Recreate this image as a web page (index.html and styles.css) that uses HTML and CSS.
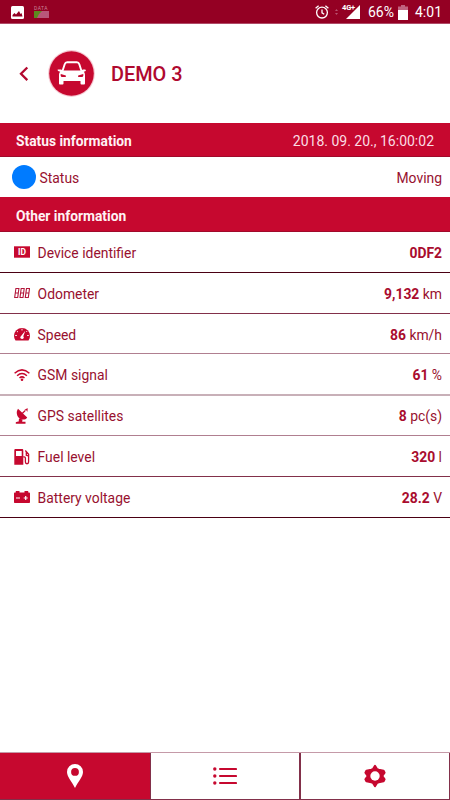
FILE: index.html
```html
<!DOCTYPE html>
<html lang="en">
<head>
    <meta charset="UTF-8">
    <meta name="viewport" content="width=device-width, initial-scale=1.0">
    <title>DEMO 3</title>
    <link rel="stylesheet" href="styles.css">
</head>
<body>
    <div class="status-bar">
        <svg class="picture-icon" width="13" height="13" viewBox="0 0 13 13"><rect width="13" height="13" rx="1.5" fill="#fff"/><path d="M1.500 10.500V9l2-2 1.500 1.500L8 5l1.500 3L10.500 7l1 3.500z" fill="#940023"/></svg>
        <div class="data-icon">
            <span>DATA</span>
            <svg width="15" height="7" viewBox="0 0 15 7"><rect width="15" height="7" fill="#b8577a"/><path d="M0 0h8L5 3 3 7H0z" fill="#5d8a1e"/></svg>
        </div>
        <div class="status-right">
            <svg class="alarm-icon" width="14" height="14" viewBox="0 0 14 14" fill="none" stroke="#fff" stroke-width="1.300"><circle cx="7" cy="7.600" r="5.400"/><path d="M7 4.500v3.300l2.200 1.400M.6 3.300L3.600.8M13.400 3.300L10.400.8"/></svg>
            <svg class="arrows-icon" width="3" height="6" viewBox="0 0 3 6" fill="#b8506e"><path d="M0 2l1.500-2L3 2zM0 4h3L1.500 6z"/></svg>
            <span class="network">4G+</span>
            <svg class="signal-icon" width="14" height="14" viewBox="0 0 14 14"><path d="M14 0v14H0z" fill="#fff"/></svg>
            <span class="percent">66%</span>
            <svg class="charge-icon" width="10" height="15" viewBox="0 0 10 15"><path d="M3 0h4v1.500h3V5H0V1.500h3z" fill="#c0627f"/><path d="M0 5h10v10H0z" fill="#fff"/></svg>
            <span class="time">4:01</span>
        </div>
    </div>

    <header>
        <svg class="back-icon" width="10" height="16" viewBox="0 0 10 16"><path d="M8.300 1.500L2 7.800l6.300 6.300" fill="none" stroke="#b3092f" stroke-width="2.300"/></svg>
        <svg class="car-icon" width="47" height="47" viewBox="0 0 47 47">
            <circle cx="23.500" cy="23.500" r="23.400" fill="#f6c9d2"/>
            <circle cx="23.500" cy="23.500" r="22.300" fill="#c6082f"/>
            <path d="M14.500 21l2.200-6.800c.4-1.300 1.200-1.900 2.500-1.900h9.600c1.300 0 2.100.6 2.500 1.900l2.200 6.800" fill="none" stroke="#fff" stroke-width="1.900"/>
            <path d="M10 19.500h3.200l1.200 1h19.200l1.200-1H37c1 0 1.200 1.500.2 1.800l-1.400.5c.9 1 1.200 2 1.200 3.500v8.200c0 .6-.3.900-.9.900h-2.700c-.6 0-.9-.3-.9-.9V31h-17v2.500c0 .6-.3.900-.9.900h-2.700c-.6 0-.9-.3-.9-.9v-8.200c0-1.500.3-2.500 1.200-3.500l-1.400-.5c-1-.3-1.800-1.800-.8-1.800z" fill="#fff"/>
            <path d="M12.800 24l5 1.500c.6 1-.2 1.600-1.200 1.600h-2.700c-1 0-1.600-1.600-1.100-3.100zM35.200 24l-5 1.500c-.6 1 .2 1.600 1.200 1.600h2.700c1 0 1.600-1.600 1.100-3.100z" fill="#c6082f"/>
        </svg>
        <h1>DEMO 3</h1>
    </header>

    <main>
        <div class="section-title">
            <h2>Status information</h2>
            <span>2018. 09. 20., 16:00:02</span>
        </div>
        <div class="status-row">
            <div class="dot"></div>
            <span>Status</span>
            <span class="value">Moving</span>
        </div>
        <div class="section-title other">
            <h2>Other information</h2>
        </div>

        <div class="row dark">
            <svg width="16" height="16" viewBox="0 0 16 16"><path d="M0 2.300h16v11.400H0z" fill="#c6082f"/><text class="id-text" x="8" y="11.100" text-anchor="middle">ID</text></svg>
            <span>Device identifier</span>
            <span class="value"><b>0DF2</b></span>
        </div>
        <div class="row">
            <svg width="16" height="16" viewBox="0 0 16 16" fill="none" stroke="#b3173b" stroke-width="1.100"><path d="M1.900 3.500h3L3.700 12.500h-3zM1.300 8h3M7.200 3.500h3L9 12.500H6zM6.600 8h3M12.500 3.500h3L14.300 12.500h-3zM11.900 8h3"/></svg>
            <span>Odometer</span>
            <span class="value"><b>9,132</b> km</span>
        </div>
        <div class="row soft">
            <svg width="16" height="16" viewBox="0 0 16 16"><path d="M1.500 14.400C.5 13 0 11.500 0 9.900a8 8 0 0 1 16 0c0 1.600-.5 3.100-1.500 4.500z" fill="#c6082f"/><path d="M11.300 4.800L9.300 10.300c1 1.300.5 2.700-1.300 2.700-1.900 0-2.400-1.800-.9-2.900z" fill="#fff"/><path d="M8 2.800v1.700M2.900 5.100l1.100 1M13.100 5.100l-.9.900M1.200 9.500h1.700M13.100 9.500h1.700" stroke="#fff" stroke-width=".9"/></svg>
            <span>Speed</span>
            <span class="value"><b>86</b> km/h</span>
        </div>
        <div class="row blurred">
            <svg width="16" height="16" viewBox="0 0 16 16" fill="none" stroke="#c6082f" stroke-width="1.500"><path d="M.6 6.200q7.400-6.600 14.800 0M3.100 8.700q4.900-4.400 9.800 0M5.500 11q2.500-2.200 5 0"/><circle cx="8" cy="12.700" r="1.300" fill="#c6082f" stroke="none"/></svg>
            <span>GSM signal</span>
            <span class="value"><b>61</b> %</span>
        </div>
        <div class="row soft">
            <svg width="16" height="16" viewBox="0 0 16 16" fill="#c6082f"><path d="M4 .8l9.200 8.600C11.500 12 7.500 12.400 5 10S2 3.800 4 .8z"/><path d="M8.200 5.500l3.200-3.100" stroke="#c6082f" stroke-width="1.300"/><path d="M10.300 1.400l3.500-1.100-.5 3.700c-.4-1.600-1.300-2.400-3-2.600zM5 10.500l3.500 1-.3 2.200h3.300v2H1.800v-1.400c.8-.6 1.900-.8 2.900-.8z"/></svg>
            <span>GPS satellites</span>
            <span class="value"><b>8</b> pc(s)</span>
        </div>
        <div class="row">
            <svg width="16" height="16" viewBox="0 0 16 16"><path d="M.3 15.800V1.400C.3.600.8.100 1.600.100H8c.8 0 1.300.5 1.300 1.300v14.400zM2 2v5h5.700V2z" fill="#c6082f" fill-rule="evenodd"/><path d="M9.200 7.800h1c.8 0 1.200.5 1.200 1.300v4c0 2.200 3.200 2.200 3.200 0V5.200L11.300 1.500M12.300 3.200v3l2 .8" fill="none" stroke="#c6082f" stroke-width="1.300"/></svg>
            <span>Fuel level</span>
            <span class="value"><b>320</b> l</span>
        </div>
        <div class="row dark">
            <svg width="16" height="16" viewBox="0 0 16 16"><path d="M0 5h16v8c0 .6-.4 1-1 1H1c-.6 0-1-.4-1-1zM0 5h16v-.6c0-.5-.3-.8-.8-.8h-1V2h-3.700v1.600H5.500V2H1.800v1.600h-1c-.5 0-.8.300-.8.800z" fill="#c6082f"/><path d="M2 9h4M9.700 9h4M11.700 7v4" stroke="#fff" stroke-width="1.200"/></svg>
            <span>Battery voltage</span>
            <span class="value"><b>28.2</b> V</span>
        </div>
    </main>

    <nav>
        <a class="active">
            <svg width="16" height="24" viewBox="0 0 16 24"><path d="M8 0a8 8 0 0 1 8 8c0 5-5 9.500-8 16C5 17.500 0 13 0 8a8 8 0 0 1 8-8zm0 4a3.900 3.900 0 1 0 0 7.800A3.900 3.900 0 0 0 8 4z" fill="#fff" fill-rule="evenodd"/></svg>
        </a>
        <a>
            <svg width="24" height="18" viewBox="0 0 24 18" fill="#c6082f"><circle cx="1.800" cy="2" r="1.700"/><circle cx="1.800" cy="9" r="1.700"/><circle cx="1.800" cy="16" r="1.700"/><path d="M7 2h16M7 9h16M7 16h16" stroke="#c6082f" stroke-width="2.100" stroke-linecap="round"/></svg>
        </a>
        <a>
            <svg width="24" height="24" viewBox="0 0 24 24"><path d="M12 1.800l2.200 3.500 1.500.5 4.900.9 1 2-2.300 3.300 2.300 3.300-1 2-4.900.9-1.500.5-2.200 3.500-2.200-3.500-1.500-.5-4.900-.9-1-2L4.700 12 2.400 8.700l1-2 4.900-.9 1.500-.5z" fill="#c6082f" stroke="#c6082f" stroke-width="2" stroke-linejoin="round"/><circle cx="12" cy="12" r="4.700" fill="#fff"/></svg>
        </a>
    </nav>
</body>
</html>
```

FILE: styles.css
```css
:root {
    --primary-red: #c6082f;
    --dark-red: #940023;
    --text-red: #98112f;
    --line: #82304a;
}

* {
    box-sizing: border-box;
}

body {
    margin: 0;
    height: 800px;
    display: flex;
    flex-direction: column;
    background: #fff;
    color: var(--text-red);
    font-family: Roboto, sans-serif;
    font-size: 13.9px;
}

svg {
    display: block;
    flex: none;
}

h1, h2 {
    margin: 0;
}

.status-bar {
    height: 24px;
    display: flex;
    align-items: center;
    padding: 1px 8px 0 11px;
    background: var(--dark-red);
    border-bottom: 1px solid #b04a67;
    color: #fff;
}

.data-icon {
    margin-left: 10px;
    padding-bottom: 2px;
    font-size: 5px;
    line-height: 6px;
    letter-spacing: 0.4px;
    color: #c98098;
}

.status-right {
    display: flex;
    align-items: center;
    margin-left: auto;
}

.arrows-icon {
    margin-left: 6px;
}

.network {
    margin: 0 -9px 8px 4px;
    font-size: 7.5px;
    font-weight: 700;
    line-height: 8px;
    letter-spacing: -0.2px;
}

.signal-icon {
    margin-right: 8px;
}

.percent, .time {
    font-size: 14px;
}

.charge-icon {
    margin: 0 7px 0 4px;
}

header {
    height: 99px;
    display: flex;
    align-items: center;
    padding-left: 19px;
}

.car-icon {
    margin: 0 16px 0 19px;
}

h1 {
    padding-top: 1px;
    font-size: 19.9px;
    font-weight: 500;
    color: #b0092f;
}

.section-title {
    height: 34px;
    display: flex;
    align-items: center;
    justify-content: space-between;
    padding: 3px 16px 0;
    background: var(--primary-red);
    border-bottom: 1px solid #a00a2b;
    color: #fbdde3;
}

.section-title span {
    font-size: 14px;
}

.section-title.other {
    height: 35px;
    padding-top: 4px;
}

h2 {
    font-size: 13.8px;
    font-weight: 700;
    color: #fff2f4;
}

.status-row {
    height: 40px;
    display: flex;
    align-items: center;
    padding: 0 8px 0 12px;
}

.status-row span {
    padding-top: 2px;
}

.dot {
    width: 24px;
    height: 24px;
    margin: 0 3.500px 0 0;
    border-radius: 50%;
    background: #007bff;
}

.row {
    height: 40.83px;
    display: flex;
    align-items: center;
    padding: 1px 8px 0 14px;
    border-bottom: 1px solid var(--line);
}

.row svg {
    margin-right: 7.6px;
}

.row span {
    padding-top: 1px;
}

.row.dark {
    border-color: #4a0013;
}

.row.soft {
    border-color: #b07f90;
}

.row.blurred {
    height: 41.4px;
    padding-top: 1px;
    border-bottom: 2px solid #c8b0b8;
}

.row.blurred + .row {
    height: 40.26px;
    padding-top: 0;
}

.value {
    margin-left: auto;
}

.value b {
    font-weight: 700;
    color: #a90c2e;
}

.id-text {
    font-size: 8.5px;
    font-weight: 700;
    fill: #fff;
}

nav {
    height: 48px;
    display: grid;
    grid-template-columns: 151px 150px 149px;
    margin-top: auto;
    border-top: 1px solid #c59aa8;
    border-bottom: 1px solid var(--line);
}

nav a {
    display: flex;
    align-items: center;
    justify-content: center;
    border-right: 1px solid var(--line);
}

nav a:nth-child(2) {
    border-right-width: 2px;
}

nav .active {
    background: var(--primary-red);
}
```
